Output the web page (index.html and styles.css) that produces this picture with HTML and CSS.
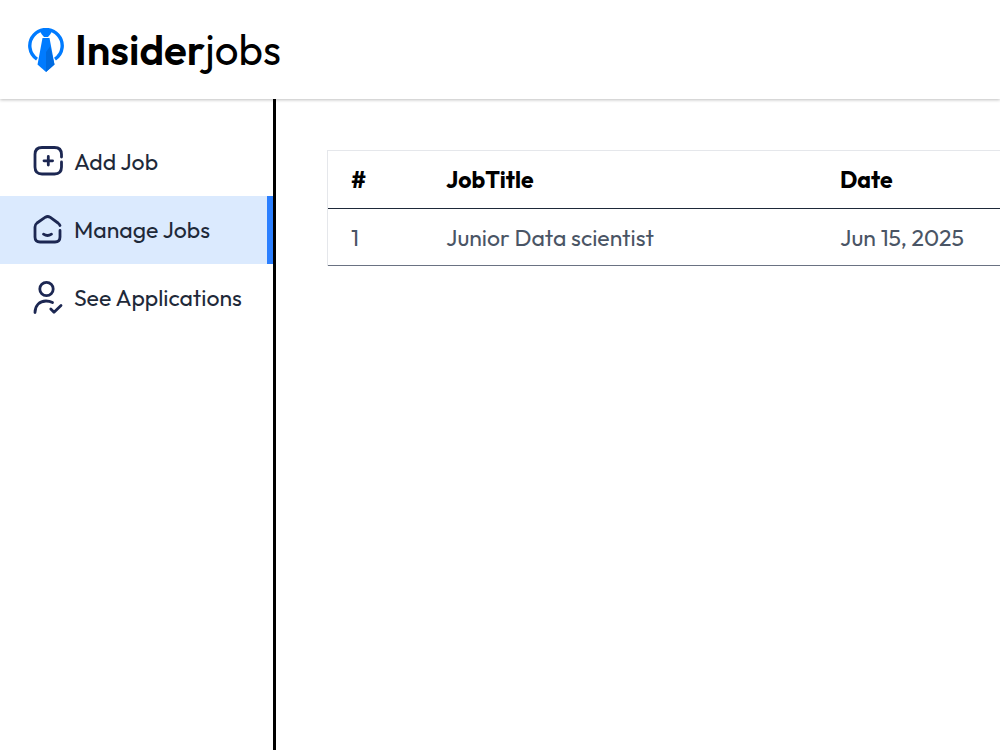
FILE: index.html
```html
<!DOCTYPE html>
<html lang="en">
<head>
<meta charset="utf-8">
<meta name="viewport" content="width=device-width, initial-scale=1">
<title>Insiderjobs</title>
<link rel="stylesheet" href="styles.css">
</head>
<body>
<header class="topbar">
  <a class="brand" href="#">
    <svg class="brand-mark" viewBox="0 0 36 44" aria-hidden="true">
      <path d="M9 31.200A16.200 16.200 0 1 1 27 31.200" fill="none" stroke="#007bff" stroke-width="3.400"/>
      <path d="M11.500 2h13l-2 4-2.500 3h-4l-2.500-3z" fill="#007bff"/>
      <path d="M14.500 10h7l5 26.500-8.500 7.500-8.500-7.500z" fill="#007bff"/>
      <path d="M18 24l4-5.500 4.500 18-8.500 7.500z" fill="#006be0"/>
    </svg>
    <span class="brand-name"><strong>Insider</strong><span class="brand-light">jobs</span></span>
  </a>
</header>
<div class="layout">
  <nav class="sidebar" aria-label="Dashboard">
    <a class="nav-item" href="#">
      <svg class="nav-icon" viewBox="0 0 30 32" aria-hidden="true"><path d="M28.500 11V8.500Q28.500 1.500 21.500 1.500H9Q2 1.500 2 8.500V21Q2 28 9 28H21.500Q28.500 28 28.500 21V16M15.300 10.500v8.600M11 14.800h8.600"/></svg>
      <span>Add Job</span>
    </a>
    <a class="nav-item active" href="#" aria-current="page">
      <svg class="nav-icon" viewBox="0 0 30 32" aria-hidden="true"><path d="M27 11.500Q26.500 10.200 25 9L17 3.200Q14.700 1.800 12.400 3.200L4 9Q2 10.500 2 13V23Q2 28 7 28H22Q27 28 27 23V16.500M10.500 20.200Q14.500 22.800 18.500 20.200"/></svg>
      <span>Manage Jobs</span>
    </a>
    <a class="nav-item" href="#">
      <svg class="nav-icon" viewBox="0 0 30 32" aria-hidden="true"><circle cx="13.500" cy="7" r="6.700"/><path d="M2 30.500C2 23.500 6.500 19 13 19Q16.500 19 19.500 20.500M17.800 27l3.200 3.200 7-6.700"/></svg>
      <span>See Applications</span>
    </a>
  </nav>
  <main class="content">
    <table class="jobs">
      <colgroup><col class="col-number"><col class="col-title"><col></colgroup>
      <thead><tr><th scope="col">#</th><th scope="col">JobTitle</th><th scope="col">Date</th></tr></thead>
      <tbody><tr><td>1</td><td>Junior Data scientist</td><td>Jun 15, 2025</td></tr></tbody>
    </table>
  </main>
</div>
</body>
</html>
```
FILE: styles.css
```css
* { box-sizing: border-box; }

body {
  margin: 0;
  min-height: 100vh;
  display: flex;
  flex-direction: column;
  background: #fff;
  color: #1e2939;
  font-family: Outfit, Lato, sans-serif;
  font-size: 23px;
  line-height: 32px;
}

.topbar {
  position: relative;
  padding: 26px 28px 25px;
  background: #fff;
  box-shadow: 0 1px 3px rgba(0, 0, 0, 0.25);
}

.brand {
  display: inline-flex;
  align-items: center;
  gap: 11px;
  height: 48px;
  color: #000;
  text-decoration: none;
  vertical-align: top;
}

.brand-mark { width: 36px; height: 44px; }
.brand-name { font-size: 42px; line-height: 50px; }
.brand-name strong { font-weight: 600; }
.brand-light { font-weight: 400; }

.layout { display: flex; flex: 1; }

.sidebar {
  width: 276px;
  flex: none;
  padding-top: 29px;
  border-right: 3px solid #000;
}

.nav-item {
  display: flex;
  align-items: center;
  gap: 11px;
  padding: 18px 28px 18px 33px;
  color: #1e2939;
  text-decoration: none;
  white-space: nowrap;
}

.nav-item.active {
  background: #dbeafe;
  border-right: 6px solid #2b7fff;
}

.nav-icon {
  width: 30px;
  height: 32px;
  flex: none;
  fill: none;
  stroke: #1c2752;
  stroke-width: 2.8;
  stroke-linecap: round;
  stroke-linejoin: round;
  overflow: visible;
}

.content {
  flex: 1;
  min-width: 0;
  padding: 51px 0 0 51px;
}

.jobs {
  width: 100%;
  table-layout: fixed;
  border-collapse: separate;
  border-spacing: 0;
  border-top: 1px solid #e5e7eb;
  border-left: 1px solid #e5e7eb;
}

.col-number { width: 95px; }
.col-title { width: 394px; }

.jobs th,
.jobs td {
  padding: 13px 0 12px 23px;
  text-align: left;
  white-space: nowrap;
}

.jobs td { padding-bottom: 11px; }

.jobs th {
  color: #000;
  font-weight: 700;
  border-bottom: 1px solid #1e2939;
}

.jobs td {
  color: #4a5565;
  border-bottom: 1px solid #6a7282;
}
```
